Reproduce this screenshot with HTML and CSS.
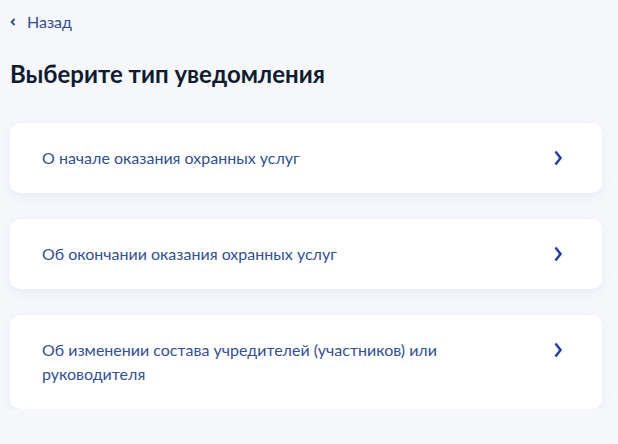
FILE: index.html
```html
<!DOCTYPE html>
<html lang="ru">
<head>
    <meta charset="UTF-8">
    <title>Выберите тип уведомления</title>
    <link rel="stylesheet" href="styles.css">
</head>
<body>
    <div class="page">
        <a href="#" class="back">
            <svg viewBox="0 0 6 8" fill="none" stroke="currentColor" stroke-width="1.8">
                <polyline points="4.6 1 1.6 4 4.6 7"></polyline>
            </svg>
            Назад
        </a>

        <h1 class="title">Выберите тип уведомления</h1>

        <div class="options">
            <a href="#" class="option">
                <span class="option-text">О начале оказания охранных услуг</span>
                <svg class="arrow" viewBox="0 0 10 16" fill="none" stroke="currentColor" stroke-width="2.6">
                    <polyline points="2.5 1.5 7.5 8 2.5 14.5"></polyline>
                </svg>
            </a>
            <a href="#" class="option">
                <span class="option-text">Об окончании оказания охранных услуг</span>
                <svg class="arrow" viewBox="0 0 10 16" fill="none" stroke="currentColor" stroke-width="2.6">
                    <polyline points="2.5 1.5 7.5 8 2.5 14.5"></polyline>
                </svg>
            </a>
            <a href="#" class="option">
                <span class="option-text">Об изменении состава учредителей (участников) или руководителя</span>
                <svg class="arrow" viewBox="0 0 10 16" fill="none" stroke="currentColor" stroke-width="2.6">
                    <polyline points="2.5 1.5 7.5 8 2.5 14.5"></polyline>
                </svg>
            </a>
        </div>
    </div>
</body>
</html>
```

FILE: styles.css
```css
* {
    margin: 0;
    padding: 0;
    box-sizing: border-box;
    font-family: Lato, "Open Sans", sans-serif;
}

body {
    background: #f5f7fb;
}

.page {
    width: 592px;
    margin-left: 10px;
    padding-top: 12px;
}

.back {
    display: flex;
    align-items: center;
    gap: 11px;
    color: #2f4c92;
    text-decoration: none;
    font-size: 16px;
    line-height: 20px;
}

.back svg {
    width: 6px;
    height: 8px;
}

.title {
    margin-top: 26px;
    font-size: 24px;
    line-height: 32px;
    font-weight: 700;
    color: #0f1c2e;
}

.options {
    display: flex;
    flex-direction: column;
    gap: 26px;
    margin-top: 33px;
}

.option {
    display: flex;
    justify-content: space-between;
    align-items: flex-start;
    padding: 23px 39px 23px 32px;
    background: #fff;
    border-radius: 10px;
    box-shadow: 0 3px 12px rgba(150, 165, 200, 0.14);
    text-decoration: none;
}

.option-text {
    max-width: 420px;
    font-size: 16px;
    line-height: 24px;
    color: #33508f;
}

.arrow {
    width: 10px;
    height: 16px;
    margin-top: 4px;
    color: #2445a0;
}
```
